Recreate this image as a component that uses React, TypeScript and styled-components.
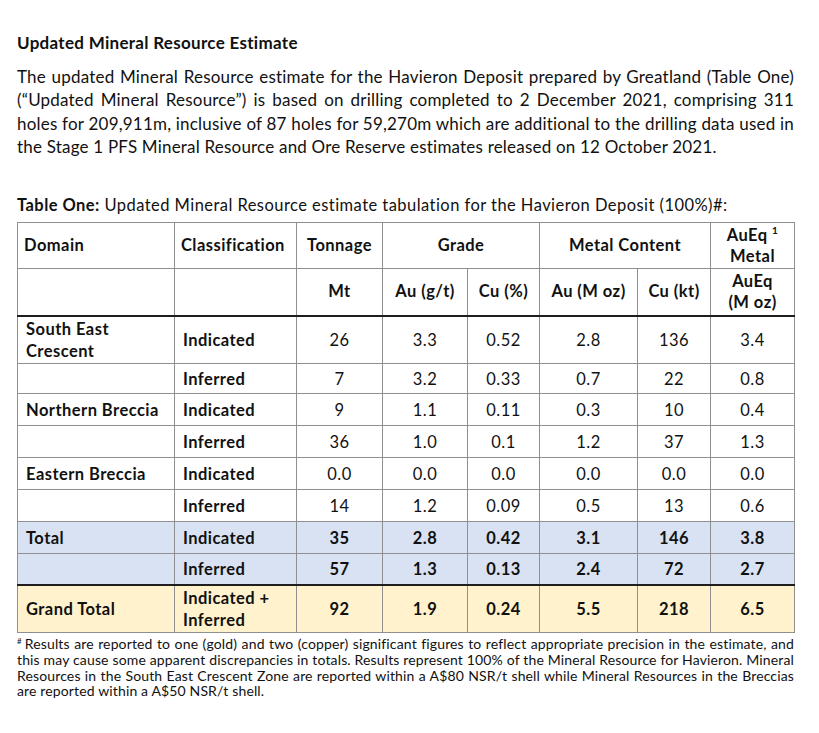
import React from "react";
import styled, { createGlobalStyle } from "styled-components";

const Global = createGlobalStyle`
  html, body { margin: 0; padding: 0; background: #ffffff; }
  body { font-family: Lato, "Open Sans", sans-serif; color: #111; }
`;

const Page = styled.div`
  width: 777px;
  padding: 33px 0 0 17px;
`;

const Title = styled.h2`
  margin: 0;
  font-size: 17px;
  letter-spacing: 0.3px;
  font-weight: 700;
  line-height: 20px;
`;

const Para = styled.p`
  margin: 12px 0 0 0;
  font-size: 17px;
  letter-spacing: 0.2px;
  line-height: 23.3px;
  text-align: justify;
`;

const Caption = styled.div`
  margin-top: 37px;
  font-size: 16.5px;
  letter-spacing: 0.45px;
  line-height: 20px;
  b { font-weight: 700; }
`;

const Table = styled.table`
  margin-top: 7px;
  border-collapse: collapse;
  table-layout: fixed;
  width: 777px;
  font-size: 16.5px;
  letter-spacing: 0.45px;
`;

const Row = styled.tr<{ $h: number; $bg?: string; $thickBottom?: boolean }>`
  height: ${(p) => p.$h}px;
  background: ${(p) => p.$bg || "transparent"};
  ${(p) => (p.$thickBottom ? "td, th { border-bottom: 2px solid #1e1e1e; }" : "")}
`;

const Cell = styled.td<{ $left?: boolean; $bold?: boolean }>`
  border: 1px solid #8f8f8f;
  padding: 0 8px;
  text-align: ${(p) => (p.$left ? "left" : "center")};
  vertical-align: middle;
  font-weight: ${(p) => (p.$bold ? 700 : 400)};
  line-height: 22px;
  white-space: nowrap;
`;

const Head = styled.th<{ $left?: boolean }>`
  border: 1px solid #8f8f8f;
  padding: 0 6px;
  text-align: ${(p) => (p.$left ? "left" : "center")};
  vertical-align: middle;
  font-weight: 700;
  line-height: 21px;
  white-space: nowrap;
`;

const Sup = styled.sup`
  font-size: 10px;
  line-height: 0;
  vertical-align: 7px;
`;

const Foot = styled.p`
  margin: 3px 0 0 0;
  font-size: 14px;
  letter-spacing: 0.14px;
  line-height: 15.7px;
  text-align: justify;
`;

const FootMark = styled.span`
  display: inline-block;
  font-size: 8px;
  line-height: 8px;
  margin-right: 3px;
  vertical-align: 5px;
`;

type R = {
  d?: string;
  c: string;
  v: string[];
  h: number;
  bg?: string;
  bold?: boolean;
  thick?: boolean;
};

const rows: R[] = [
  { d: "South East Crescent", c: "Indicated", v: ["26", "3.3", "0.52", "2.8", "136", "3.4"], h: 48 },
  { c: "Inferred", v: ["7", "3.2", "0.33", "0.7", "22", "0.8"], h: 30 },
  { d: "Northern Breccia", c: "Indicated", v: ["9", "1.1", "0.11", "0.3", "10", "0.4"], h: 32 },
  { c: "Inferred", v: ["36", "1.0", "0.1", "1.2", "37", "1.3"], h: 32 },
  { d: "Eastern Breccia", c: "Indicated", v: ["0.0", "0.0", "0.0", "0.0", "0.0", "0.0"], h: 32 },
  { c: "Inferred", v: ["14", "1.2", "0.09", "0.5", "13", "0.6"], h: 32 },
  { d: "Total", c: "Indicated", v: ["35", "2.8", "0.42", "3.1", "146", "3.8"], h: 32, bg: "#d9e2f3", bold: true },
  { c: "Inferred", v: ["57", "1.3", "0.13", "2.4", "72", "2.7"], h: 31, bg: "#d9e2f3", bold: true, thick: true },
  { d: "Grand Total", c: "Indicated + Inferred", v: ["92", "1.9", "0.24", "5.5", "218", "6.5"], h: 48, bg: "#fff2cc", bold: true },
];

const widths = [157, 122, 86, 85, 72, 98, 73, 84];

function twoLines(s: string) {
  if (s === "South East Crescent")
    return (
      <>
        South East
        <br />
        Crescent
      </>
    );
  if (s === "Indicated + Inferred")
    return (
      <>
        Indicated +
        <br />
        Inferred
      </>
    );
  return s;
}

export default function App() {
  return (
    <>
      <Global />
      <Page>
        <Title>Updated Mineral Resource Estimate</Title>
        <Para>
          The updated Mineral Resource estimate for the Havieron Deposit prepared by Greatland (Table One)
          (“Updated Mineral Resource”) is based on drilling completed to 2 December 2021, comprising 311
          holes for 209,911m, inclusive of 87 holes for 59,270m which are additional to the drilling data used in
          the Stage 1 PFS Mineral Resource and Ore Reserve estimates released on 12 October 2021.
        </Para>
        <Caption>
          <b>Table One:</b> Updated Mineral Resource estimate tabulation for the Havieron Deposit (100%)#:
        </Caption>
        <Table>
          <colgroup>
            {widths.map((w, i) => (
              <col key={i} style={{ width: w }} />
            ))}
          </colgroup>
          <thead>
            <Row $h={46}>
              <Head $left>Domain</Head>
              <Head $left>Classification</Head>
              <Head>Tonnage</Head>
              <Head colSpan={2}>Grade</Head>
              <Head colSpan={2}>Metal Content</Head>
              <Head>
                AuEq <Sup>1</Sup>
                <br />
                Metal
              </Head>
            </Row>
            <Row $h={47} $thickBottom>
              <Head />
              <Head />
              <Head>Mt</Head>
              <Head>Au (g/t)</Head>
              <Head>Cu (%)</Head>
              <Head>Au (M oz)</Head>
              <Head>Cu (kt)</Head>
              <Head>
                AuEq
                <br />
                (M oz)
              </Head>
            </Row>
          </thead>
          <tbody>
            {rows.map((r, i) => (
              <Row key={i} $h={r.h} $bg={r.bg} $thickBottom={r.thick}>
                <Cell $left $bold>
                  {twoLines(r.d || "")}
                </Cell>
                <Cell $left $bold>
                  {twoLines(r.c)}
                </Cell>
                {r.v.map((x, j) => (
                  <Cell key={j} $bold={r.bold}>
                    {x}
                  </Cell>
                ))}
              </Row>
            ))}
          </tbody>
        </Table>
        <Foot>
          <FootMark>#</FootMark>Results are reported to one (gold) and two (copper) significant figures to reflect
          appropriate precision in the estimate, and this may cause some apparent discrepancies in totals. Results
          represent 100% of the Mineral Resource for Havieron. Mineral Resources in the South East Crescent Zone are
          reported within a A$80 NSR/t shell while Mineral Resources in the Breccias are reported within a A$50
          NSR/t shell.
        </Foot>
      </Page>
    </>
  );
}
